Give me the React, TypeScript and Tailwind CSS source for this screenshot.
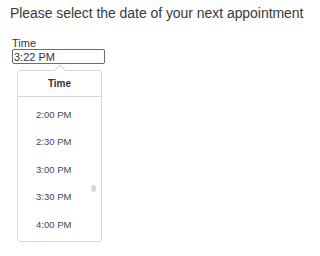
export default function App() {
  const slots = ['2:00 PM', '2:30 PM', '3:00 PM', '3:30 PM', '4:00 PM']

  return (
    <div className="px-[10px] pt-[5px] font-['Liberation_Sans',Arial,sans-serif] text-[#32363a]">
      <h1 className="text-[14px] leading-[16px] tracking-[-0.05px] text-[#3a3a3a]">Please select the date of your next appointment</h1>

      <div className="mt-[16px] ml-[2px]">
        <label className="block text-[11px] leading-[12px]">Time</label>
        <div className="w-[93px] h-[15px] border border-[#6a6d70] rounded-[2px] flex items-center px-[1px] text-[11px] leading-[12px]">
          3:22 PM
        </div>

        {/* time picker popover */}
        <div className="relative ml-[5px] mt-[6px] w-[85px] h-[172px] border border-[#d9d9d9] rounded-[3px] bg-white">
          <div className="absolute -top-[5px] left-[38px] w-[8px] h-[8px] rotate-45 bg-white border-l border-t border-[#d9d9d9]" />
          <div className="h-[26px] flex items-center justify-center border-b border-[#d9d9d9] text-[10px] font-bold text-[#32363a]">
            Time
          </div>
          <div className="relative pt-[4px]">
            {slots.map((s) => (
              <div key={s} className="h-[27.5px] flex items-center pl-[18px] text-[9.5px] text-[#44484c]">
                {s}
              </div>
            ))}
            <div className="absolute right-[5px] top-[88px] w-[5px] h-[7px] rounded-full bg-[#d5dadd]" />
          </div>
        </div>
      </div>
    </div>
  )
}
